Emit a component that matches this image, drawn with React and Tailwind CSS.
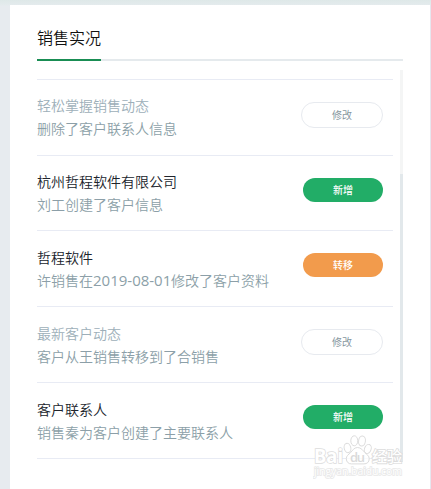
import React from 'react';

const activities = [
  { title: '轻松掌握销售动态', text: '删除了客户联系人信息', type: 'edit', height: 'h-[76px]', offset: '-mt-0.5' },
  { title: '杭州哲程软件有限公司', text: '刘工创建了客户信息', type: 'add', height: 'h-[75px]' },
  { title: '哲程软件', before: '许销售在', date: '2019-08-01', text: '修改了客户资料', type: 'move', height: 'h-[76px]' },
  { title: '最新客户动态', text: '客户从王销售转移到了合销售', type: 'edit', height: 'h-[76px]' },
  { title: '客户联系人', text: '销售秦为客户创建了主要联系人', type: 'add', height: 'h-[76px]' },
];

const buttons = {
  edit: { label: '修改', className: 'mb-[5px] w-[82px] h-[26px] border border-[#e7eaef] bg-white text-[#87979f]' },
  add: { label: '新增', className: 'mb-[7px] w-20 h-6 bg-[#22ad67] text-white font-medium' },
  move: { label: '转移', className: 'mb-[7px] w-20 h-6 bg-[#f29b4c] text-white font-medium' },
};

const ActivityRow = ({ item }) => {
  const button = buttons[item.type];

  return (
    <li className={`flex items-center justify-between border-b border-[#e8ebf4] pr-2.5 ${item.height}`}>
      <div className={`text-sm leading-[23px] whitespace-nowrap font-[350] ${item.offset || ''}`}>
        <h3 className={item.type === 'edit' ? 'text-[#9dafb9]' : 'text-[#20242c]'}>{item.title}</h3>
        <p className="text-[#8c9fa8]">
          {item.before}
          {item.date && <span className="inline-block w-[78px] text-[15px] leading-none font-normal">{item.date}</span>}
          {item.text}
        </p>
      </div>
      <button className={`flex items-center justify-center rounded-full text-[10px] leading-none ${button.className}`}>
        {button.label}
      </button>
    </li>
  );
};

const Watermark = () => (
  <div className="absolute left-[313px] top-[434px] w-[92px] h-[46px] pointer-events-none select-none">
    <svg className="w-full h-full" viewBox="0 0 92 46" fill="#fff" fillOpacity="0.75" stroke="#dcdcdc" strokeWidth="1">
      <ellipse cx="34.500" cy="14" rx="3.300" ry="4.700" transform="rotate(-15 34.500 14)" />
      <ellipse cx="41.300" cy="6.800" rx="3.500" ry="5" />
      <ellipse cx="49" cy="7" rx="3.400" ry="5" transform="rotate(8 49 7)" />
      <ellipse cx="54.800" cy="15" rx="3.300" ry="4.700" transform="rotate(20 54.800 15)" />
      <path d="M44.500 13.500c-3.500 0-5 3-7 5.200-2 2-4.200 3-4.200 6 0 3.500 2.400 5.200 5.200 5.200h12.500c3 0 5.200-1.700 5.200-5.200 0-3-2.300-4-4.200-6-2-2.200-4-5.200-7.500-5.200z" />
      <g fontFamily="'Open Sans', 'Noto Sans CJK SC', sans-serif" paintOrder="stroke" fillOpacity="1">
        <text x="1" y="28.500" fontSize="20" fontWeight="700" strokeWidth="1.600" textLength="29" lengthAdjust="spacingAndGlyphs">Bai</text>
        <text x="37" y="28" fontSize="13" fontWeight="600" fill="#dadada" stroke="none" textLength="15">du</text>
        <text x="59" y="28" fontSize="15" fontWeight="500" strokeWidth="1.600" textLength="30">经验</text>
        <text x="1" y="41" fontSize="10.500" fontWeight="400" strokeWidth="1.600" stroke="#e8e8e8" textLength="88">jingyan.baidu.com</text>
      </g>
    </svg>
  </div>
);

const App = () => {
  return (
    <div className="relative h-[489px] w-[431px] overflow-hidden bg-[#e7ebef] pt-[5px] pl-2.5 font-['Open_Sans','Noto_Sans_CJK_SC',sans-serif] bg-[linear-gradient(#dee8e8_0px,#e4ebed_5px,#e7ebef_6px)]">
      <section className="h-[484px] border-r border-[#e6e7ef] bg-white pl-[27px] pr-[27px]">
        {/* Card title */}
        <header className="h-14 border-b-2 border-[#e5eaed]">
          <h2 className="h-14 w-16 border-b-2 border-[#198d54] pt-[21px] text-base leading-6 font-[350] whitespace-nowrap text-[#111]">
            销售实况
          </h2>
        </header>

        {/* Activity list */}
        <div className="mt-[9px] flex h-[392px] justify-between">
          <ul className="mt-[9px] h-[380px] w-[356px] border-t border-[#e8ebf4]">
            {activities.map((item) => (
              <ActivityRow key={item.title} item={item} />
            ))}
          </ul>
          <div className="h-full w-[3px] bg-[#f4f5f5] pt-[104px]">
            <div className="h-full bg-[#e2e8eb]" />
          </div>
        </div>
      </section>
      <Watermark />
    </div>
  );
};

export default App;
